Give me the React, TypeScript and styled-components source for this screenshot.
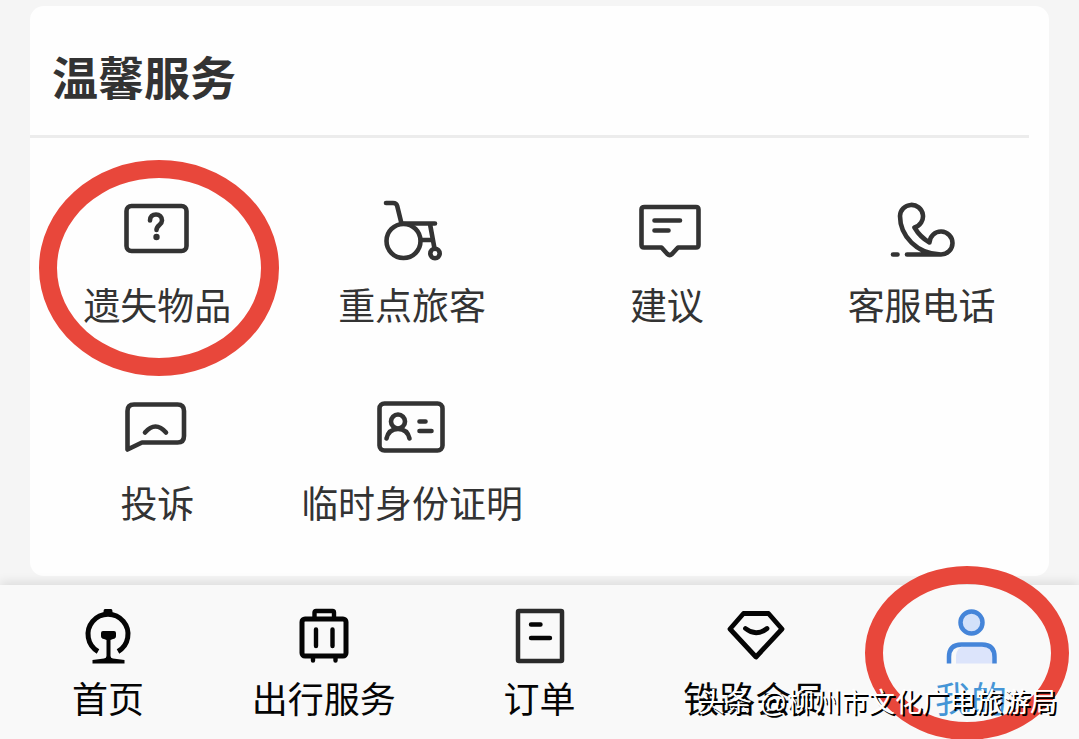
import React from 'react';
import styled, { createGlobalStyle } from 'styled-components';

const GlobalStyle = createGlobalStyle`
  * { box-sizing: border-box; }
  body {
    margin: 0;
    background: #f5f5f5;
    font-family: "Noto Sans CJK SC", "Noto Sans", sans-serif;
  }
`;

const Page = styled.div`
  display: flex;
  flex-direction: column;
  min-height: 100vh;
  overflow: hidden;
`;

const Main = styled.main`
  flex: 1;
  padding: 6px 30px 9px;
`;

const Card = styled.section`
  background: #fefefe;
  border-radius: 14px;
`;

const CardHeader = styled.header`
  margin-right: 20px;
  padding: 45px 0 36px 22px;
  border-bottom: 3px solid #ececec;
`;

const CardTitle = styled.h2`
  margin: 0;
  font-size: 46px;
  line-height: 48px;
  font-weight: 700;
  color: #333;
`;

const ServiceGrid = styled.div`
  display: grid;
  grid-template-columns: repeat(4, 1fr);
  row-gap: 68px;
  padding: 56px 0 54px;
`;

const ItemButton = styled.button`
  position: relative;
  display: flex;
  flex-direction: column;
  align-items: center;
  padding: 0;
  border: 0;
  background: none;
  font-family: inherit;
  white-space: nowrap;
  cursor: pointer;
`;

const ServiceItem = styled(ItemButton)`
  gap: 18px;
  font-size: 37px;
  line-height: 40px;
  color: #333;
`;

const TabBar = styled.nav`
  position: relative;
  display: grid;
  grid-template-columns: repeat(5, 1fr);
  padding: 21px 0 22px;
  background: #f9f9f9;
  box-shadow: 0 -3px 10px rgba(0, 0, 0, 0.1);
`;

const TabItem = styled(ItemButton)<{ $active?: boolean }>`
  gap: 11px;
  font-size: 36px;
  line-height: 40px;
  color: ${(p) => (p.$active ? '#4595d6' : '#050505')};
`;

const Ring = styled.span<{ $w: number; $h: number; $top: number; $shift: number }>`
  position: absolute;
  top: ${(p) => p.$top}px;
  left: calc(50% - ${(p) => p.$w / 2}px + ${(p) => p.$shift}px);
  width: ${(p) => p.$w}px;
  height: ${(p) => p.$h}px;
  border: 18px solid #e8473b;
  border-radius: 50%;
  pointer-events: none;
`;

const Watermark = styled.span`
  position: absolute;
  right: 22px;
  bottom: 16px;
  font-family: "Liberation Sans", "Noto Sans CJK SC", sans-serif;
  font-size: 27px;
  line-height: 40px;
  color: #fff;
  text-shadow: 2px 2px 0 #000;
  white-space: nowrap;
  pointer-events: none;
`;

const Glyph = styled.svg<{ $size: number; $weight: number }>`
  display: block;
  width: ${(p) => p.$size}px;
  height: ${(p) => p.$size}px;
  fill: none;
  stroke: currentColor;
  stroke-width: ${(p) => p.$weight};
  stroke-linecap: round;
  stroke-linejoin: round;
`;

const ServiceIcon = ({ children }: { children: React.ReactNode }) => (
  <Glyph $size={72} $weight={4.6} viewBox="0 0 72 72" aria-hidden="true">{children}</Glyph>
);

const TabIcon = ({ children }: { children: React.ReactNode }) => (
  <Glyph $size={60} $weight={4.4} viewBox="0 0 60 60" aria-hidden="true">{children}</Glyph>
);

const services = [
  {
    label: '遗失物品',
    marked: true,
    icon: (
      <>
        <rect x="5.5" y="12" width="60" height="45" rx="5" />
        <path d="M29 26.5C29 22.5 31.500 20.500 35 20.500S41 23 41 26.500C41 31 35.500 31 35.500 36" />
        <circle cx="35.500" cy="43" r="3.200" fill="currentColor" stroke="none" />
      </>
    ),
  },
  {
    label: '重点旅客',
    icon: (
      <>
        <path d="M10 9H17Q20.500 9 21.200 12L25.500 29.500H59M54 30L58.500 54.500M46 46H56.500" />
        <circle cx="27.500" cy="47" r="17" />
        <circle cx="59" cy="59.500" r="4.700" />
      </>
    ),
  },
  {
    label: '建议',
    icon: (
      <>
        <path d="M13.500 13H65Q67.500 13 67.500 15.500V51Q67.500 53.500 65 53.500H47L41 60Q38.700 62 36.400 60L30.500 53.500H13Q10.500 53.500 10.500 51V15.500Q10.500 13 13.500 13Z" />
        <path d="M23.500 26.500H49M23.500 36.500H37.500" />
      </>
    ),
  },
  {
    label: '客服电话',
    icon: (
      <path d="M7 60.500H11.500M21 60.500H55A11.500 11.500 0 1 0 43.500 48.500Q34 43 28.500 33.500A11.500 11.500 0 1 0 14 22C14 42 31 60 55 60.500" />
    ),
  },
  {
    label: '投诉',
    icon: (
      <>
        <path d="M13 12.500H56.500Q63 12.500 63 19V44Q63 50.500 56.500 50.500H21L6.500 57.500V19Q6.500 12.500 13 12.500Z" />
        <path d="M24 40.500Q34.500 28.500 45 40.500" />
      </>
    ),
  },
  {
    label: '临时身份证明',
    icon: (
      <>
        <rect x="3.500" y="11.500" width="63" height="47" rx="5" />
        <circle cx="22" cy="29.500" r="7" />
        <path d="M10.500 46.500C12 40 16.500 37 22 37S32 40 33.500 46.500M43.500 29.500H49.500M43.500 39H55.500" />
      </>
    ),
  },
];

const tabs = [
  {
    label: '首页',
    icon: (
      <>
        <path d="M20 45.500A20 20 0 1 1 40 45.500" strokeWidth="5" strokeLinecap="butt" />
        <path
          d="M27 3H33Q34.500 3 34.500 6V9H25.500V6Q25.500 3 27 3ZM25 25H36Q38 25 38 27V30Q38 32.500 35 33L32.500 34V50Q32.500 52 35 52.500L46.500 54V57.500H14.500V54L26 52.500Q28.500 52 28.500 50V34L26 33Q23 32.500 23 30V27Q23 25 25 25Z"
          fill="currentColor"
          stroke="none"
        />
      </>
    ),
  },
  {
    label: '出行服务',
    icon: (
      <>
        <rect x="8" y="13" width="44" height="37" rx="3" strokeWidth="5" />
        <path d="M20.500 12V6.500Q20.500 5 22 5H38.500Q40 5 40 6.500V12M22 23.500V40M38.500 23.500V40M19 52V54.500M41.500 52V54.500" />
      </>
    ),
  },
  {
    label: '订单',
    icon: (
      <>
        <rect x="9" y="5" width="44" height="50" rx="1" stroke="#2b2b2b" strokeWidth="4.500" />
        <path d="M22 18.500H31.500M22 32H41" />
      </>
    ),
  },
  {
    label: '铁路会员',
    icon: (
      <path d="M18.500 7.500H43.500L57 23L31 51L5 23ZM20.500 22.500Q31 31 42 22.500" strokeWidth="4.800" />
    ),
  },
  {
    label: '我的',
    active: true,
    icon: (
      <>
        <path d="M15 57.500V49Q16 42 23 40H42Q51.500 40 51.500 50V57.500Z" fill="#dce4fb" stroke="none" />
        <g stroke="#4585d9" strokeWidth="4.500" strokeLinecap="butt">
          <circle cx="30.500" cy="16.500" r="11" fill="#d3e1fa" />
          <path d="M8 57.500V51Q8 38.500 20.500 38.500H41Q53.500 38.500 53.500 51V57.500" />
        </g>
      </>
    ),
  },
];

export default function App() {
  return (
    <Page>
      <GlobalStyle />
      <Main>
        <Card>
          <CardHeader>
            <CardTitle>温馨服务</CardTitle>
          </CardHeader>
          <ServiceGrid>
            {services.map((s) => (
              <ServiceItem key={s.label} type="button">
                <ServiceIcon>{s.icon}</ServiceIcon>
                <span>{s.label}</span>
                {s.marked && <Ring $w={240} $h={216} $top={-34} $shift={2} />}
              </ServiceItem>
            ))}
          </ServiceGrid>
        </Card>
      </Main>
      <TabBar>
        {tabs.map((t) => (
          <TabItem key={t.label} type="button" $active={t.active}>
            <TabIcon>{t.icon}</TabIcon>
            <span>{t.label}</span>
            {t.active && <Ring $w={204} $h={174} $top={-40} $shift={-4} />}
          </TabItem>
        ))}
        <Watermark>头条 @柳州市文化广电旅游局</Watermark>
      </TabBar>
    </Page>
  );
}
